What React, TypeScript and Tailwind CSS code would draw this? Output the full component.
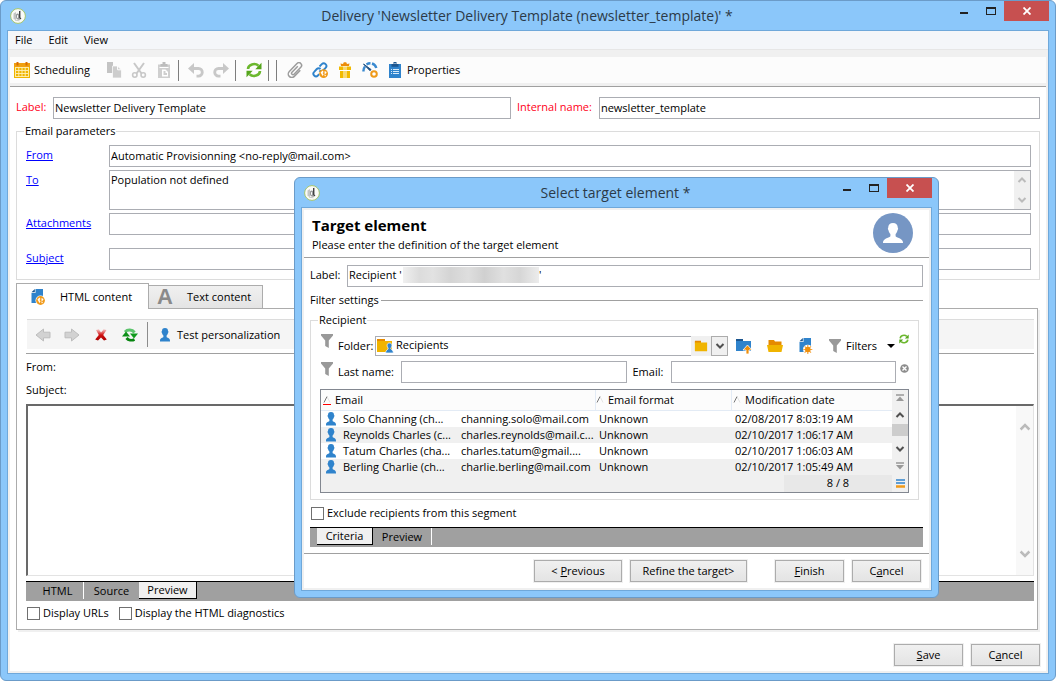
import React, { useState } from 'react';

type IconProps = { className?: string };

const RECIPIENTS = [
  { name: 'Solo Channing (ch...', email: 'channing.solo@mail.com', format: 'Unknown', date: '02/08/2017 8:03:19 AM' },
  { name: 'Reynolds Charles (c...', email: 'charles.reynolds@mail.c...', format: 'Unknown', date: '02/10/2017 1:06:17 AM' },
  { name: 'Tatum Charles (cha...', email: 'charles.tatum@gmail....', format: 'Unknown', date: '02/10/2017 1:06:03 AM' },
  { name: 'Berling Charlie (ch...', email: 'charlie.berling@mail.com', format: 'Unknown', date: '02/10/2017 1:05:49 AM' },
];

const FIELD = 'h-[22px] min-w-0 border border-[#abadb3] bg-white px-px pb-0.5 outline-none';

function AppLogo() {
  return (
    <svg viewBox="0 0 16 16" className="size-4 shrink-0">
      <circle cx="8" cy="8" r="7.4" fill="#fbfbf8" stroke="#a4c56c" />
      <path d="M3.5 5.5l2.5-1.500v8l-2.500-1z" fill="#c3c5c4" />
      <path d="M6 6.500a2.400 2.400 0 0 1 3-.6V3.200l1.400-.6v8.800c-2 .8-4.400.2-4.400-2.400z" fill="#9a9c9d" />
      <path d="M9.700 3v6.500l1.300 1.500" fill="none" stroke="#333" strokeWidth="1.100" />
      <path d="M7.500 7.200v2.600" stroke="#fff" />
      <path d="M5 12.200l4.500.6" stroke="#c9ccc9" />
    </svg>
  );
}

function CalendarIcon() {
  return (
    <svg viewBox="0 0 16 16" className="size-4 shrink-0">
      <path d="M0 1h16v15H0z" fill="#efb400" />
      <path d="M0 1h16v4H0z" fill="#f0a010" />
      <path d="M3.500 0v3.500M12.500 0v3.500" stroke="#d96b00" strokeWidth="2" />
      <path d="M2 5.500h12M2 8.500h12M2 11.500h12M2 14.500h12M1.500 5v10M4.800 5v10M8 5v10M11.200 5v10M14.500 5v10" stroke="#fff0b8" strokeWidth=".9" />
    </svg>
  );
}

function CopyIcon() {
  return (
    <svg viewBox="0 0 16 16" className="size-4 shrink-0">
      <path d="M1 0h6v11H1z" fill="#c4c4c4" />
      <path d="M6.500 4h5l4 4v8h-9z" fill="#cdcdcd" stroke="#fff" strokeWidth=".7" />
      <path d="M11.600 3.800v4h4" fill="none" stroke="#fff" />
    </svg>
  );
}

function CutIcon() {
  return (
    <svg viewBox="0 0 16 16" className="size-4 shrink-0" fill="none" stroke="#c8c8c8" strokeWidth="2">
      <path d="M3 1l7.500 10.500M13 1L5.500 11.500" />
      <circle cx="3.800" cy="13" r="2.200" strokeWidth="1.600" />
      <circle cx="12.200" cy="13" r="2.200" strokeWidth="1.600" />
    </svg>
  );
}

function PasteIcon() {
  return (
    <svg viewBox="0 0 16 16" className="size-4 shrink-0">
      <path d="M2 2.500h12V16H2z" fill="#cfcfcf" />
      <path d="M4.500 2h7v2.500h-7zM6.500 0h3v2.500h-3z" fill="#bdbdbd" />
      <path d="M3.500 5.500h9" stroke="#fff" />
      <path d="M6 7.500h3.500L12 10v4.500H6z" fill="#fff" />
      <path d="M7.500 9h2v2h1.500v2h-3.500z" fill="#cfcfcf" />
    </svg>
  );
}

function UndoIcon({ className = '' }: IconProps) {
  return (
    <svg viewBox="0 0 16 16" className={`size-4 shrink-0 ${className}`}>
      <path d="M0 6.500L6 1v11z" fill="#c8c8c8" />
      <path d="M5 6.500h5.500a3.800 3.800 0 0 1 0 7.600H8.500" fill="none" stroke="#c8c8c8" strokeWidth="2.800" />
    </svg>
  );
}

function RefreshIcon({ className = 'size-4' }: IconProps) {
  return (
    <svg viewBox="0 0 16 16" className={`shrink-0 ${className}`}>
      <path d="M2 7a6 5 0 0 1 10.500-3.200" fill="none" stroke="#6cb82e" strokeWidth="2.600" />
      <path d="M15.500 .8v6.400H9.300z" fill="#55a51c" />
      <path d="M14 9a6 5 0 0 1-10.500 3.200" fill="none" stroke="#6cb82e" strokeWidth="2.600" />
      <path d="M.5 15.200V8.800h6.200z" fill="#55a51c" />
    </svg>
  );
}

function ClipIcon() {
  return (
    <svg viewBox="0 0 16 16" className="size-4 shrink-0" fill="none" stroke="#9c9c9c" strokeWidth="1.500">
      <path d="M10.800 4.200L5 10.200a1.400 1.400 0 0 0 2 2l6.800-7a2.600 2.600 0 0 0-3.800-3.700L2.300 9.400a3.500 3.500 0 0 0 5 5l6-6.200" />
    </svg>
  );
}

function Globe({ cx, cy }: { cx: number; cy: number }) {
  return (
    <g>
      <circle cx={cx} cy={cy} r="4.400" fill="#f09a1a" />
      <path d={`M${cx - 3} ${cy - 1}l2-2 1 1.500-1 1 1 1.500-1 1.500zM${cx + 1} ${cy - 2.5}l2 1-.5 1.500-1.500.5zM${cx + 0.5} ${cy + 1}l2 .5-1 1.500z`} fill="#fff" />
    </g>
  );
}

function LinkIcon() {
  return (
    <svg viewBox="0 0 16 16" className="size-4 shrink-0">
      <g fill="none" stroke="#2f83cc" strokeWidth="1.900">
        <path d="M7.500 4.500l2.300-2.300a2.600 2.600 0 0 1 3.800 3.700L11 8.500a2.500 2.500 0 0 1-3.600 0" />
        <path d="M8.500 7a2.500 2.500 0 0 0-3.700 0L2.200 9.800a2.600 2.600 0 0 0 3.700 3.700l1.300-1.300" />
      </g>
      <Globe cx={11.6} cy={11.6} />
    </svg>
  );
}

function GiftIcon() {
  return (
    <svg viewBox="0 0 16 16" className="size-4 shrink-0">
      <path d="M2 4.500h12v3.500H2zM3 9h10v7H3z" fill="#f2ba00" />
      <path d="M7 4v12M9 4v12" stroke="#fff" strokeWidth=".9" />
      <path d="M4 4l-.5-2.500L6 2l.8-1.800h2.400L10 2l2.500-.5L12 4z" fill="#ec8c0a" />
      <path d="M2 8.500h12" stroke="#fff" />
    </svg>
  );
}

function GaugeIcon() {
  return (
    <svg viewBox="0 0 16 16" className="size-4 shrink-0">
      <path d="M1.500 9.500A6.800 6.800 0 0 1 3 4.500M4.500 2.500a6.800 6.800 0 0 1 4-1.200M10 1.500a6.600 6.600 0 0 1 4.300 4.500" fill="none" stroke="#3a8ad0" strokeWidth="2.400" />
      <path d="M1.500 2l7.500 5.500-1 1.200z" fill="#1e4f80" stroke="#1e4f80" />
      <circle cx="12" cy="12" r="2.800" fill="#fff" stroke="#ef9a1a" strokeWidth="2" />
    </svg>
  );
}

function ClipboardIcon() {
  return (
    <svg viewBox="0 0 16 16" className="size-4 shrink-0">
      <path d="M2 2h12v14H2z" fill="#2f83cc" />
      <path d="M4.500 2h7v2.800h-7zM6.500 0h3v3h-3z" fill="#1c568f" />
      <path d="M7.500 1.500h1" stroke="#fff" />
      <path d="M4 7.500h1M6 7.500h6M4 9.500h1M6 9.500h6M4 11.500h1M6 11.500h6" stroke="#d6e9f8" />
    </svg>
  );
}

function PageGlobeIcon() {
  return (
    <svg viewBox="0 0 16 16" className="size-4 shrink-0">
      <path d="M5.500 0H13v14H1.500V4h4z" fill="#2f83cc" />
      <path d="M4.800 0v3.300H1.500z" fill="#1c568f" />
      <circle cx="10.500" cy="11.500" r="5" fill="#fff" />
      <Globe cx={10.5} cy={11.5} />
    </svg>
  );
}

function PageSunIcon() {
  return (
    <svg viewBox="0 0 16 16" className="size-4 shrink-0">
      <path d="M5.500 0H13v14H1.500V4h4z" fill="#2f83cc" />
      <path d="M4.800 0v3.300H1.500z" fill="#1c568f" />
      <circle cx="9.800" cy="11.500" r="4.800" fill="#fff" />
      <path d="M9.800 7v9M5.300 11.500h9M6.600 8.300l6.400 6.400M13 8.300l-6.400 6.400" stroke="#f3a640" strokeWidth="1.200" />
      <circle cx="9.800" cy="11.500" r="2.800" fill="#ee8f0c" />
    </svg>
  );
}

function ArrowIcon({ className = '' }: IconProps) {
  return (
    <svg viewBox="0 0 16 16" className={`size-4 shrink-0 ${className}`}>
      <path d="M1 8l7.500-6v3.200H15v5.600H8.500V14z" fill="#d2d2d2" stroke="#bdbdbd" />
    </svg>
  );
}

function RedCrossIcon() {
  return (
    <svg viewBox="0 0 16 16" className="size-4 shrink-0">
      <defs>
        <linearGradient id="cross" x1="0" y1="0" x2="0" y2="1">
          <stop offset=".1" stopColor="#f0a0a0" />
          <stop offset=".5" stopColor="#d01010" />
          <stop offset="1" stopColor="#a80000" />
        </linearGradient>
      </defs>
      <path d="M3 3l3-.5L8 5.500l2.500-3 3 .5-3.300 5 3.600 4.500-2.800 1L8 10.500 5 13.500l-2.800-1L5.800 8z" fill="url(#cross)" />
    </svg>
  );
}

function ReloadIcon() {
  return (
    <svg viewBox="0 0 16 16" className="size-4 shrink-0">
      <path d="M3 5a6 5.500 0 0 1 9.500.5" fill="none" stroke="#5cc46c" strokeWidth="3" />
      <path d="M8 6.500h8L12 11.500z" fill="#0f9a1c" />
      <path d="M12.500 12.500a6 5 0 0 1-8-1.500" fill="none" stroke="#078510" strokeWidth="2.800" />
      <path d="M0 9.500h8L4 4.500z" fill="#0c8f18" />
    </svg>
  );
}

// small blue figure used in lists and toolbars
function PersonIcon() {
  return (
    <svg viewBox="0 0 16 16" className="size-4 shrink-0">
      <path d="M8 1c2.200 0 3 1.200 3 3 .6.2.6 1.600 0 1.900-.2 1.200-.8 2-1.400 2.500V10c.2.900 3.400.800 3.400 3.800v.7H3v-.7c0-3 3.200-2.900 3.400-3.800V8.400C5.800 7.900 5.200 7.100 5 5.900c-.6-.3-.6-1.700 0-1.900 0-1.800.8-3 3-3z" fill="#2f83cc" />
    </svg>
  );
}

function FunnelIcon() {
  return (
    <svg viewBox="0 0 14 16" className="h-4 w-3.5 shrink-0">
      <path d="M1 1h12v1.500L8.800 7.500V15L5.200 13V7.500L1 2.500z" fill="#999" />
    </svg>
  );
}

function FolderIcon({ className = 'size-4' }: IconProps) {
  return (
    <svg viewBox="0 0 16 16" className={`shrink-0 ${className}`}>
      <path d="M1 2h7v3H1z" fill="#e58a00" />
      <path d="M1 4h14v10H1z" fill="#f0b400" />
    </svg>
  );
}

function FolderPersonIcon() {
  return (
    <svg viewBox="0 0 17 16" className="h-4 w-[17px] shrink-0">
      <path d="M0 1h8v3H0z" fill="#e58a00" />
      <path d="M0 3h15v11H0z" fill="#f0b400" />
      <path d="M12.500 5c1.800 0 2.400 1.200 2.400 2.500s-.5 2-1 2.500v1c0 .5 2.500 1 2.500 4H8.600c0-3 2.500-3.500 2.500-4v-1c-.5-.5-1-1.200-1-2.500S10.700 5 12.500 5z" fill="#2f83cc" stroke="#fff" strokeWidth=".7" />
    </svg>
  );
}

function FolderUpIcon() {
  return (
    <svg viewBox="0 0 16 16" className="size-4 shrink-0">
      <path d="M0 1h7v3H0z" fill="#1c568f" />
      <path d="M0 3h15v10H0z" fill="#2f83cc" />
      <path d="M11.500 7L16 12h-3v4h-3v-4H7z" fill="#ee8f0c" stroke="#fff" strokeWidth=".8" />
    </svg>
  );
}

function FolderOpenIcon() {
  return (
    <svg viewBox="0 0 16 16" className="size-4 shrink-0">
      <path d="M1.500 2h5.500l1 1.500h6.500V7h-13z" fill="#e58a00" />
      <path d="M0 7h16l-1.500 7h-13z" fill="#f0b400" />
    </svg>
  );
}

function Chevron({ className = '' }: IconProps) {
  return (
    <svg viewBox="0 0 10 10" className={`size-2.5 ${className}`}>
      <path d="M1.500 3L5 6.500 8.500 3" fill="none" stroke="currentColor" strokeWidth="2" />
    </svg>
  );
}

function SortMark({ active = false }: { active?: boolean }) {
  return (
    <svg viewBox="0 0 8 12" className="h-3 w-2 shrink-0">
      <path d="M1 8.500l3-6" stroke="#777" />
      <path d="M4 2.500l3 6" stroke="#e4e4e4" />
      {active && <path d="M0 10.500h8" stroke="#f00" />}
    </svg>
  );
}

function Separator() {
  return <span className="h-[21px] w-px shrink-0 bg-[#7d7d7d]" />;
}

function ToolButton({ label, children }: { label: string; children: React.ReactNode }) {
  return <button type="button" aria-label={label} className="flex items-center justify-center">{children}</button>;
}

function PushButton({ className, children }: { className: string; children: React.ReactNode }) {
  return (
    <button
      type="button"
      className={`h-[22px] border border-[#acacac] bg-linear-to-b from-[#f0f0f0] to-[#e4e4e4] leading-5 outline outline-[#f0f0f0] ${className}`}
    >
      {children}
    </button>
  );
}

function WindowFrame({ title, className, children }: { title: string; className: string; children: React.ReactNode }) {
  return (
    <section className={`flex flex-col rounded-md border border-[#6b9bc8] bg-[#8bc7fa] px-1.5 pb-1.5 ${className}`}>
      <header className="flex h-[29px] shrink-0 items-start">
        <div className="ml-[3px] flex h-[29px] w-[94px] items-center"><AppLogo /></div>
        <h1 className="flex-1 pt-[5px] text-center text-sm leading-5 whitespace-nowrap text-[#2b3a48]">{title}</h1>
        <div className="flex h-5 items-start">
          <button type="button" aria-label="Minimize" className="flex h-5 w-[27px] items-center justify-center pt-1">
            <span className="h-0.5 w-2 bg-[#222]" />
          </button>
          <button type="button" aria-label="Maximize" className="flex h-5 w-[27px] items-center justify-center">
            <span className="h-2 w-2.5 border border-t-2 border-[#222]" />
          </button>
          <button type="button" aria-label="Close" className="flex h-5 w-[45px] items-center justify-center bg-[#c75050]">
            <svg viewBox="0 0 8 8" className="size-2"><path d="M.5.5l7 7M7.500.5l-7 7" stroke="#fff" strokeWidth="1.800" /></svg>
          </button>
        </div>
      </header>
      <div className="flex flex-1 flex-col border border-[#6fa8da] bg-white">{children}</div>
    </section>
  );
}

function FieldRow({ id, label, value, className = '' }: { id: string; label: string; value?: string; className?: string }) {
  return (
    <div className={`flex items-center ${className}`}>
      <label htmlFor={id} className="w-[83px] shrink-0 pb-0.5"><a href="#" className="text-[#0000ff] underline">{label}</a></label>
      <input id={id} defaultValue={value} className={`${FIELD} flex-1`} />
    </div>
  );
}

function CheckBox({ label }: { label: string }) {
  return (
    <label className="flex items-center gap-[3px]">
      <input type="checkbox" className="size-[13px] appearance-none border border-[#707070] bg-white checked:bg-[#2f83cc]" />
      {label}
    </label>
  );
}

function MainToolbar() {
  return (
    <div className="mx-0.5 flex h-[26px] items-center bg-[#fcfcfc] pl-1">
      <button type="button" className="flex w-[92px] items-center gap-1"><CalendarIcon />Scheduling</button>
      <div className="flex gap-[9px]">
        <ToolButton label="Copy"><CopyIcon /></ToolButton>
        <ToolButton label="Cut"><CutIcon /></ToolButton>
        <ToolButton label="Paste"><PasteIcon /></ToolButton>
      </div>
      <div className="ml-1.5 flex items-center gap-[9px]">
        <Separator />
        <ToolButton label="Undo"><UndoIcon /></ToolButton>
        <ToolButton label="Redo"><UndoIcon className="-scale-x-100" /></ToolButton>
      </div>
      <div className="ml-1.5 flex items-center gap-2.5">
        <Separator />
        <ToolButton label="Refresh"><RefreshIcon /></ToolButton>
      </div>
      <div className="ml-1.5 flex items-center gap-[7px]"><Separator /><Separator /></div>
      <div className="ml-2.5 flex items-center gap-[9px]">
        <ToolButton label="Attach"><ClipIcon /></ToolButton>
        <ToolButton label="Links"><LinkIcon /></ToolButton>
        <ToolButton label="Offers"><GiftIcon /></ToolButton>
        <ToolButton label="Tracking"><GaugeIcon /></ToolButton>
      </div>
      <button type="button" className="ml-[9px] flex items-center gap-1"><ClipboardIcon />Properties</button>
    </div>
  );
}

function EmailParameters() {
  return (
    <fieldset className="mt-1 min-w-0 border border-[#dcdcdc] pr-2 pb-[9px] pl-[9px]">
      <legend className="-ml-0.5 px-px leading-4">Email parameters</legend>
      <FieldRow id="from" label="From" value="Automatic Provisionning <no-reply@mail.com>" className="mt-1.5" />
      <div className="mt-[3px] flex items-start">
        <label htmlFor="to" className="w-[83px] shrink-0 pt-0.5"><a href="#" className="text-[#0000ff] underline">To</a></label>
        <div className="flex h-10 flex-1 border border-[#abadb3]">
          <textarea id="to" defaultValue="Population not defined" className="min-w-0 flex-1 resize-none overflow-hidden px-px pt-px outline-none" />
          <div className="flex w-4 flex-col items-center justify-between bg-[#f0f0f0] py-1 text-[#bbb]">
            <Chevron className="rotate-180" />
            <Chevron />
          </div>
        </div>
      </div>
      <FieldRow id="attachments" label="Attachments" className="mt-[3px]" />
      <FieldRow id="subject" label="Subject" className="mt-[13px]" />
    </fieldset>
  );
}

function ContentPanel() {
  const [view, setView] = useState('Preview');

  return (
    <div className="mt-[3px] mr-0.5 flex flex-1 flex-col">
      <div className="relative z-10 -mb-px flex items-end">
        <button type="button" className="flex h-[26px] w-[133px] items-center gap-3.5 border border-b-0 border-[#acacac] bg-white pl-[13px]">
          <PageGlobeIcon />HTML content
        </button>
        <button type="button" className="flex h-6 w-[114px] items-center gap-3.5 border border-l-0 border-[#acacac] bg-linear-to-b from-[#f0f0f0] to-[#e4e4e4] pl-2">
          <span aria-hidden="true" className="w-4 text-center font-['Liberation_Sans',sans-serif] text-[22px] leading-5 font-bold text-[#8a8a8a]">A</span>
          Text content
        </button>
      </div>
      <div className="flex flex-1 flex-col border border-[#acacac] pt-2.5 pr-[3px] pl-[9px] shadow-[2px_2px_0_#f0f0f0]">
        <div className="ml-px flex h-[30px] items-center border-t border-[#dcdcdc] bg-[#f5f5f5] pl-2">
          <div className="flex gap-[13px]">
            <ToolButton label="Back"><ArrowIcon /></ToolButton>
            <ToolButton label="Forward"><ArrowIcon className="-scale-x-100" /></ToolButton>
            <ToolButton label="Stop"><RedCrossIcon /></ToolButton>
            <ToolButton label="Reload"><ReloadIcon /></ToolButton>
          </div>
          <span className="mx-[9px] h-[25px] w-px bg-[#8c8c8c]" />
          <button type="button" className="flex items-center gap-1"><PersonIcon />Test personalization</button>
        </div>
        <div className="mt-1 mb-px border-t border-[#a0a0a0]" />
        <p className="leading-[23px]">From:</p>
        <p className="leading-[23px]">Subject:</p>
        <div className="mt-[3px] flex min-h-20 flex-1 border border-t-2 border-l-2 border-[#e3e3e3] border-t-[#696969] border-l-[#696969]">
          <div className="flex-1" />
          <div className="flex w-[17px] flex-col items-center justify-between bg-[#f8f8f8] py-4 text-[#bbb]">
            <Chevron className="scale-125 rotate-180" />
            <Chevron className="scale-125" />
          </div>
        </div>
        <div className="mt-[5px] flex h-5 items-start border-t border-black bg-[#a0a0a0] pl-1.5">
          {['HTML', 'Source', 'Preview'].map((name, i) => (
            <button
              key={name}
              type="button"
              onClick={() => setView(name)}
              className={`h-[17px] leading-4 ${i === 0 ? 'w-[52px]' : i === 1 ? 'w-[55px]' : 'w-[58px]'} ${view === name ? 'border-r border-b border-black bg-[#f0f0f0]' : i === 1 ? '' : 'border-r border-white'}`}
            >
              {name}
            </button>
          ))}
        </div>
        <div className="flex h-7 items-center gap-2.5 pb-1 pl-px">
          <CheckBox label="Display URLs" />
          <CheckBox label="Display the HTML diagnostics" />
        </div>
      </div>
    </div>
  );
}

function RecipientTable() {
  return (
    <div className="mt-1.5 flex border border-[#828790] bg-[#f0f0f0]">
      <div className="min-w-0 flex-1">
        <table className="w-full table-fixed border-separate border-spacing-0">
          <colgroup>
            <col className="w-[138px]" />
            <col className="w-[137px]" />
            <col className="w-[136px]" />
            <col />
          </colgroup>
          <thead>
            <tr className="h-[21px] bg-[#fcfcfc] text-left">
              <th colSpan={2} className="border-r border-b border-[#e3ebf5] p-0 font-normal"><span className="flex items-center gap-1 pl-0.5"><SortMark active />Email</span></th>
              <th className="border-r border-b border-[#e3ebf5] p-0 font-normal"><span className="flex items-center gap-1"><SortMark />Email format</span></th>
              <th className="border-b border-[#e3ebf5] p-0 font-normal"><span className="flex items-center gap-1 pl-px"><SortMark />Modification date</span></th>
            </tr>
          </thead>
          <tbody>
            {RECIPIENTS.map(r => (
              <tr key={r.name} className="h-4 bg-white leading-4 even:bg-[#f0f0f0]">
                <td className="p-0 whitespace-nowrap"><span className="flex items-center gap-1 pl-0.5"><PersonIcon />{r.name}</span></td>
                <td className="p-0 pl-0.5 whitespace-nowrap">{r.email}</td>
                <td className="p-0 pl-[3px] whitespace-nowrap">{r.format}</td>
                <td className="p-0 pl-[3px] whitespace-nowrap">{r.date}</td>
              </tr>
            ))}
          </tbody>
        </table>
        <div className="flex h-[17px] justify-end">
          <div className="w-[108px] bg-[#e8e8e8] text-center leading-4">8 / 8</div>
        </div>
      </div>
      <div className="flex w-4 flex-col items-center bg-[#f0f0f0] pt-1 pb-1 text-[#505050]">
        <svg viewBox="0 0 8 8" className="size-2"><path d="M0 1h8" stroke="#999" strokeWidth="1.500" /><path d="M4 2.500L8 7H0z" fill="#999" /></svg>
        <Chevron className="mt-2 rotate-180" />
        <span className="mt-1 h-3 w-4 bg-[#cdcdcd]" />
        <Chevron className="mt-2" />
        <svg viewBox="0 0 8 8" className="mt-2 size-2"><path d="M0 1h8" stroke="#999" strokeWidth="1.500" /><path d="M0 3h8L4 7.500z" fill="#999" /></svg>
        <svg viewBox="0 0 9 9" className="mt-auto size-[9px]"><path d="M0 1h9M0 4h9" stroke="#2f83cc" strokeWidth="1.600" /><path d="M0 7.500h9" stroke="#f09a1a" strokeWidth="2.500" /></svg>
      </div>
    </div>
  );
}

function RecipientFilter() {
  return (
    <fieldset className="mr-1 min-w-0 border border-[#dcdcdc] pr-[9px] pb-1.5 pl-[9px]">
      <legend className="-ml-0.5 px-px leading-4">Recipient</legend>
      <div className="mt-2 flex h-5 items-center">
        <span className="mr-1 mb-2.5"><FunnelIcon /></span>
        <label htmlFor="folder" className="w-[37px] shrink-0 whitespace-nowrap">Folder:</label>
        <div className="flex h-5 flex-1 items-center border border-r-0 border-[#abadb3] pl-px">
          <FolderPersonIcon />
          <input id="folder" defaultValue="Recipients" className="min-w-0 flex-1 pb-0.5 pl-0.5 outline-none" />
        </div>
        <ToolButton label="Choose folder"><span className="flex h-5 w-5 items-center justify-center bg-[#f0f0f0]"><FolderIcon className="size-3.5" /></span></ToolButton>
        <button type="button" aria-label="Folder list" className="flex h-5 w-[17px] items-center justify-center border border-[#acacac] bg-[#f0f0f0] text-[#505050]"><Chevron /></button>
        <div className="ml-2 flex gap-[15px]">
          <ToolButton label="Parent folder"><FolderUpIcon /></ToolButton>
          <ToolButton label="Open folder"><FolderOpenIcon /></ToolButton>
          <ToolButton label="New document"><PageSunIcon /></ToolButton>
        </div>
        <button type="button" className="ml-3.5 flex w-[67px] items-center gap-1">
          <FunnelIcon />Filters
          <span className="ml-auto border-x-4 border-t-4 border-x-transparent border-t-black" />
        </button>
        <span className="mb-3.5 ml-1 flex"><ToolButton label="Refresh list"><RefreshIcon className="size-2.5" /></ToolButton></span>
      </div>
      <div className="mt-[5px] flex h-[22px] items-center">
        <span className="mr-1 mb-1.5"><FunnelIcon /></span>
        <label htmlFor="lastname" className="w-[63px] shrink-0">Last name:</label>
        <input id="lastname" className={`${FIELD} flex-1`} />
        <label htmlFor="email" className="ml-1.5 w-[38px] shrink-0">Email:</label>
        <input id="email" className={`${FIELD} flex-1`} />
        <button type="button" aria-label="Clear" className="mb-2 ml-1">
          <svg viewBox="0 0 9 9" className="size-[9px]"><circle cx="4.500" cy="4.500" r="4.300" fill="#8c8c8c" /><path d="M2.500 2.500l4 4M6.500 2.500l-4 4" stroke="#fff" strokeWidth="1.400" /></svg>
        </button>
      </div>
      <RecipientTable />
    </fieldset>
  );
}

function TargetDialog() {
  const [tab, setTab] = useState('Criteria');

  return (
    <WindowFrame title="Select target element *" className="absolute top-[177px] left-[294px] h-[421px] w-[645px]">
      <div className="flex flex-1 flex-col border-2 border-[#f0f0f0]">
        <div className="flex h-[47px] items-start justify-between pt-[3px] pr-4 pl-2">
          <div className="pt-0.5">
            <h2 className="text-[15px] leading-5 font-bold">Target element</h2>
            <p className="leading-5">Please enter the definition of the target element</p>
          </div>
          <div className="flex size-10 items-center justify-center rounded-full bg-[#7696c4]">
            <svg viewBox="0 0 20 20" className="size-5">
              <path d="M10 0c3 0 4.800 1.800 4.800 4.800.5.300.4 1.900-.2 2.200-.4 1.800-1 3-2 3.900v2.300c.5 1.500 7.400 1.800 7.400 6.300V20H0v-.5c0-4.500 6.900-4.800 7.400-6.300v-2.300c-1-.9-1.600-2.100-2-3.900-.6-.3-.7-1.900-.2-2.200C5.200 1.800 7 0 10 0z" fill="#fff" />
            </svg>
          </div>
        </div>
        <div className="border-t border-[#a0a0a0]" />
        <div className="flex flex-col pr-1.5 pl-1.5">
          <div className="mt-[7px] flex items-center">
            <label htmlFor="target" className="w-[37px] shrink-0 pb-0.5">Label:</label>
            <div className={`${FIELD} flex flex-1 items-center`}>
              <input id="target" defaultValue="Recipient '" className="w-[54px] outline-none" />
              <span className="h-4 w-[136px] bg-[linear-gradient(to_right,#f0f0f0,#dcdcdc_12%,#e2e2e2_22%,#d4d4d4_35%,#dedede_48%,#d0d0d0_60%,#e0e0e0_74%,#d6d6d6_86%,#ececec)]" />
              <span>'</span>
            </div>
          </div>
          <div className="mt-[5px] mb-1 flex h-4 items-center gap-0.5">Filter settings<span className="flex-1 border-t border-[#a0a0a0]" /></div>
          <RecipientFilter />
          <div className="mt-[5px] flex h-4 items-center pl-px"><CheckBox label="Exclude recipients from this segment" /></div>
          <div className="mt-1.5 flex h-5 items-start border-t border-black bg-[#a0a0a0] pl-[7px]">
            {['Criteria', 'Preview'].map((name, i) => (
              <button
                key={name}
                type="button"
                onClick={() => setTab(name)}
                className={`h-[17px] leading-4 ${i === 0 ? 'w-14' : 'w-[59px]'} ${tab === name ? 'border-r border-b border-black bg-[#f0f0f0]' : 'border-r border-white'}`}
              >
                {name}
              </button>
            ))}
          </div>
        </div>
        <div className="mt-1.5 border-t border-[#a0a0a0]" />
        <div className="mt-1.5 flex justify-end gap-2 pr-2">
          <PushButton className="w-[88px]">&lt; <u>P</u>revious</PushButton>
          <PushButton className="mr-5 w-[117px]">Refine the target&gt;</PushButton>
          <PushButton className="w-[69px]"><u>F</u>inish</PushButton>
          <PushButton className="w-[69px]">C<u>a</u>ncel</PushButton>
        </div>
      </div>
    </WindowFrame>
  );
}

export default function App() {
  return (
    <main className="relative flex min-h-screen flex-col bg-white font-['Open_Sans',sans-serif] text-[11px] leading-4 text-black">
      <WindowFrame title="Delivery 'Newsletter Delivery Template (newsletter_template)' *" className="flex-1">
        <nav className="flex h-[19px] items-center gap-4 border-b border-[#e6e6e6] bg-[#f4f6f9] pl-[7px]">
          <button type="button">File</button>
          <button type="button">Edit</button>
          <button type="button">View</button>
        </nav>
        <div className="bg-[#f0f0f0] pt-[7px] pb-[3px]"><MainToolbar /></div>
        <div className="flex flex-1 flex-col border-x-2 border-b-2 border-[#f0f0f0]">
          <div className="border-t border-[#a0a0a0]" />
          <div className="flex flex-1 flex-col pr-1.5 pb-[5px] pl-1.5">
            <div className="mt-2.5 flex items-center">
              <label htmlFor="label" className="w-[37px] shrink-0 pb-0.5 text-[#ff0020]">Label:</label>
              <input id="label" defaultValue="Newsletter Delivery Template" className={`${FIELD} flex-[458]`} />
              <label htmlFor="internal" className="ml-1.5 w-[82px] shrink-0 pb-0.5 whitespace-nowrap text-[#ff0020]">Internal name:</label>
              <input id="internal" defaultValue="newsletter_template" className={`${FIELD} flex-[441]`} />
            </div>
            <EmailParameters />
            <ContentPanel />
            <div className="mt-3.5 flex justify-end gap-2">
              <PushButton className="w-[69px]"><u>S</u>ave</PushButton>
              <PushButton className="w-[69px]">C<u>a</u>ncel</PushButton>
            </div>
          </div>
        </div>
      </WindowFrame>
      <TargetDialog />
    </main>
  );
}
